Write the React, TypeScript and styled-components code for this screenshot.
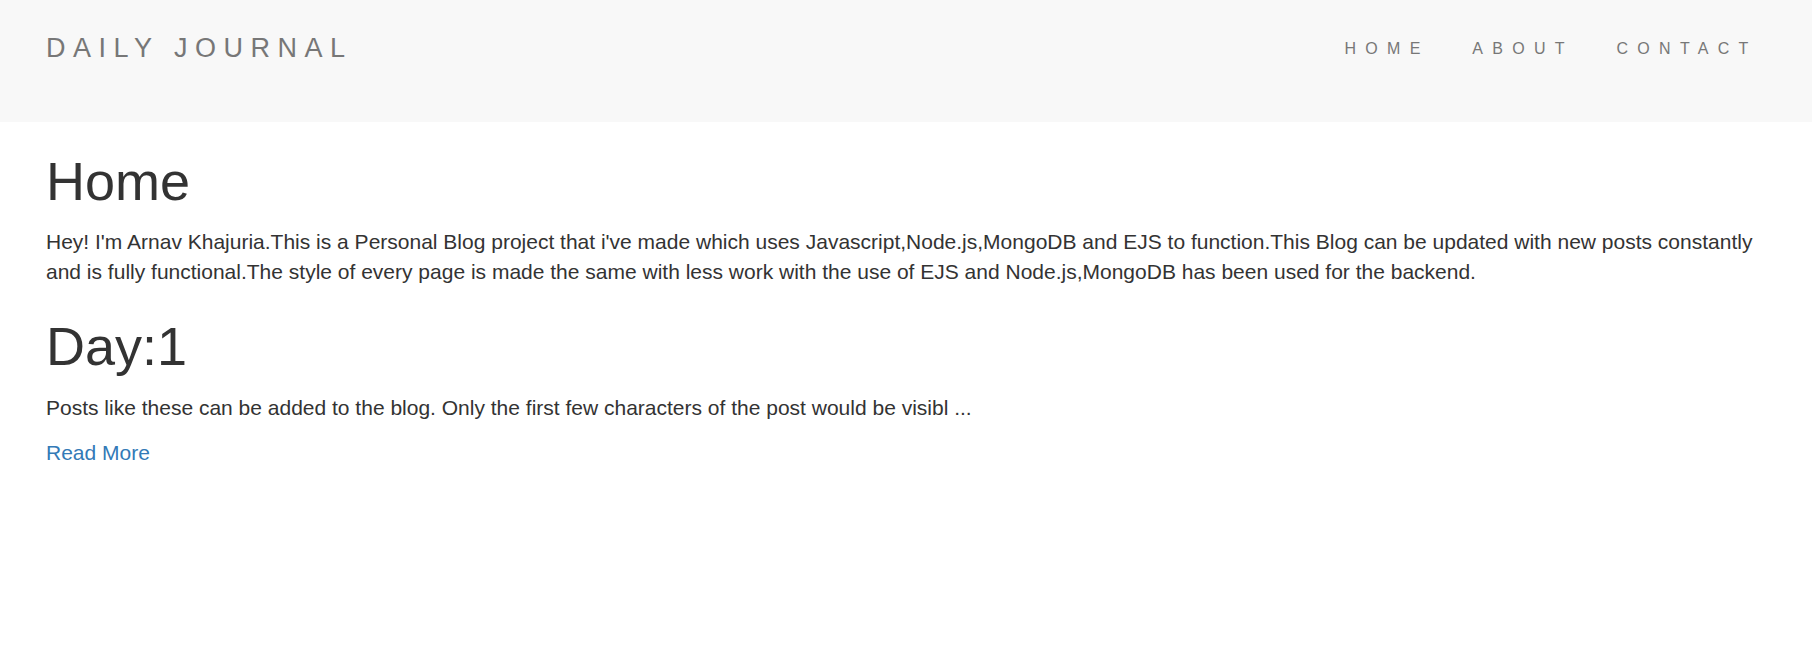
import React from "react";
import styled, { createGlobalStyle } from "styled-components";

const GlobalStyle = createGlobalStyle`
  html, body {
    margin: 0;
    padding: 0;
    background: #ffffff;
  }
  body {
    font-family: "Liberation Sans", Arial, Helvetica, sans-serif;
    font-size: 21px;
    line-height: 1.42857;
    color: #333333;
  }
  * { box-sizing: border-box; }
`;

const Navbar = styled.header`
  height: 122px;
  background: #f8f8f8;
  display: flex;
  align-items: flex-start;
  justify-content: space-between;
  padding: 33px 33px 0 46px;
`;

const Brand = styled.a`
  font-size: 27px;
  line-height: 30px;
  letter-spacing: 7.5px;
  color: #777777;
  text-decoration: none;
  white-space: nowrap;
`;

const NavList = styled.ul`
  list-style: none;
  margin: 0;
  padding: 0;
  display: flex;
`;

const NavLink = styled.a`
  display: block;
  padding: 0 21.3px;
  font-size: 16px;
  line-height: 32px;
  letter-spacing: 9.3px;
  color: #777777;
  text-decoration: none;
`;

const Main = styled.main`
  padding: 0 46px;
  overflow: hidden;
`;

const Title = styled.h1`
  font-size: 54px;
  font-weight: 400;
  line-height: 1.1;
  margin: 30px 0 16px;
  color: #333333;
`;

const Para = styled.p`
  margin: 0 0 15px;
`;

const MoreLink = styled.a`
  color: #337ab7;
  text-decoration: none;
`;

const posts = [
  {
    title: "Day:1",
    body: "Posts like these can be added to the blog. Only the first few characters of the post would be visibl ...",
  },
];

export default function App() {
  return (
    <>
      <GlobalStyle />
      <Navbar>
        <Brand href="#">DAILY JOURNAL</Brand>
        <NavList>
          <li><NavLink href="#">HOME</NavLink></li>
          <li><NavLink href="#">ABOUT</NavLink></li>
          <li><NavLink href="#">CONTACT</NavLink></li>
        </NavList>
      </Navbar>
      <Main>
        <Title>Home</Title>
        <Para>
          Hey! I'm Arnav Khajuria.This is a Personal Blog project that i've made which uses Javascript,Node.js,MongoDB and EJS to function.This Blog can be updated with new posts constantly and is fully functional.The style of every page is made the same with less work with the use of EJS and Node.js,MongoDB has been used for the backend.
        </Para>
        {posts.map((p) => (
          <section key={p.title}>
            <Title>{p.title}</Title>
            <Para>{p.body}</Para>
            <Para>
              <MoreLink href="#">Read More</MoreLink>
            </Para>
          </section>
        ))}
      </Main>
    </>
  );
}
